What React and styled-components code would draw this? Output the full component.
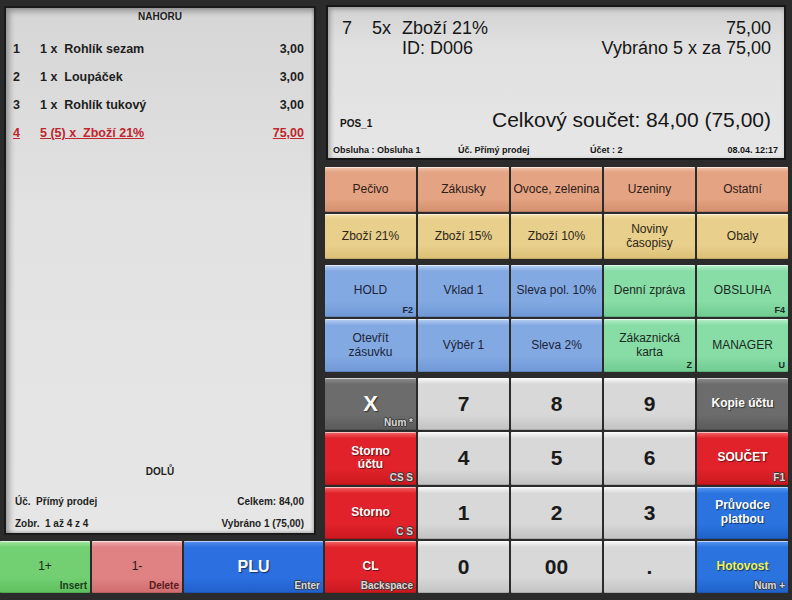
import React from "react";
import styled, { createGlobalStyle } from "styled-components";

const GlobalStyle = createGlobalStyle`
  html, body {
    margin: 0;
    padding: 0;
    background: #2b2b2b;
  }
  body {
    font-family: "Liberation Sans", Arial, sans-serif;
  }
`;

const tones = {
  orange: { hi: "#f3c7b0", base: "#e4a383", low: "#d48f6e", fg: "#2c2018" },
  yellow: { hi: "#f6e2ae", base: "#e8cf8b", low: "#dbbf75", fg: "#2c2618" },
  blue: { hi: "#b8d0f4", base: "#83a9e2", low: "#6f98d6", fg: "#1c2438", hk: "#1c2438" },
  green: { hi: "#b8f0ca", base: "#88dca6", low: "#6fcc90", fg: "#1a2a1e", hk: "#1a2a1e" },
  gray: { hi: "#fafafa", base: "#d8d8d8", low: "#c2c2c2", fg: "#1a1a1a" },
  dark: { hi: "#8e8e8e", base: "#6c6c6c", low: "#5a5a5a", fg: "#ffffff", hk: "#d8d8d8", outline: true },
  red: { hi: "#f46a6a", base: "#e2222a", low: "#c9181f", fg: "#ffffff", hk: "#e4d4d4", outline: true },
  pay: { hi: "#5a98f0", base: "#2b74e0", low: "#1f62c8", fg: "#ffffff", hk: "#d0dcf0", outline: true },
  plus: { hi: "#a6e8a6", base: "#72d072", low: "#5cbf5c", fg: "#1a2a1a", hk: "#1d3a1d" },
  minus: { hi: "#f2b0b0", base: "#e08284", low: "#d06c6e", fg: "#2a1616", hk: "#5a1c1c" },
  plu: { hi: "#5a92ee", base: "#2c6fe0", low: "#2160cc", fg: "#ffffff", hk: "#d0dcf0", outline: true },
};

const Page = styled.div`
  width: 792px;
  height: 600px;
  display: flex;
  gap: 2px;
  box-sizing: border-box;
  padding-bottom: 7px;
  overflow: hidden;
`;

const LeftColumn = styled.div`
  width: 323px;
  display: flex;
  flex-direction: column;
`;

const ReceiptPanel = styled.div`
  margin: 6px 7px 6px 4px;
  flex: 1;
  border: 2px solid #1a1a1a;
  background: linear-gradient(to bottom, #d6d6d6 0%, #e2e2e2 40%, #e6e6e6 100%);
  box-shadow: inset 3px 3px 6px rgba(0, 0, 0, 0.35), inset -1px -1px 3px rgba(0, 0, 0, 0.2);
  display: flex;
  flex-direction: column;
  color: #1e1e1e;
`;

const PanelCaption = styled.div`
  height: ${(p) => p.$h || 18}px;
  line-height: ${(p) => p.$h || 18}px;
  text-align: center;
  font-size: 10px;
  font-weight: bold;
`;

const ItemList = styled.div`
  margin-top: 9px;
  display: flex;
  flex-direction: column;
`;

const ItemRow = styled.div`
  height: 28px;
  display: grid;
  grid-template-columns: 27px 1fr auto;
  align-items: center;
  padding: 0 10px 0 7px;
  font-size: 12.5px;
  font-weight: bold;
  color: ${(p) => (p.$selected ? "#c0262c" : "#1e1e1e")};
  text-decoration: ${(p) => (p.$selected ? "underline" : "none")};
`;

const ItemText = styled.span`
  white-space: pre;
`;

const Spacer = styled.div`
  flex: 1;
`;

const PanelFooterRow = styled.div`
  height: 20px;
  display: flex;
  justify-content: space-between;
  align-items: center;
  padding: 0 10px 0 9px;
  font-size: 10px;
  font-weight: bold;
  margin-top: ${(p) => p.$top || 0}px;
  white-space: pre;
`;

const BottomKeys = styled.div`
  height: 52px;
  display: grid;
  grid-template-columns: 90px 90px 1fr;
  gap: 2px;
`;

const RightColumn = styled.div`
  width: 463px;
  display: flex;
  flex-direction: column;
`;

const Display = styled.div`
  margin: 5px 2px 0 1px;
  height: 155px;
  box-sizing: border-box;
  border: 2px solid #161616;
  background: linear-gradient(to bottom, #d2d2d2 0%, #e0e0e0 25%, #e6e6e6 100%);
  box-shadow: inset 2px 2px 5px rgba(0, 0, 0, 0.3);
  display: flex;
  flex-direction: column;
  padding-top: 11px;
  color: #161616;
`;

const DisplayLine = styled.div`
  height: 20px;
  display: grid;
  grid-template-columns: 30px 30px 1fr auto;
  align-items: center;
  padding: 0 13px 0 14px;
  font-size: 18px;
  white-space: pre;
`;

const TotalRow = styled.div`
  height: 26px;
  display: flex;
  justify-content: space-between;
  align-items: baseline;
  padding: 0 13px 0 12px;
`;

const PosName = styled.span`
  font-size: 10px;
  font-weight: bold;
`;

const Total = styled.span`
  font-size: 21px;
`;

const StatusBar = styled.div`
  height: 14px;
  margin: 9px 0 1px;
  padding: 0 6px 0 5px;
  display: grid;
  grid-template-columns: 125px 132px 1fr auto;
  align-items: center;
  font-size: 9px;
  font-weight: bold;
  white-space: pre;
`;

const KeyGrid = styled.div`
  display: grid;
  grid-template-columns: repeat(5, 1fr);
  grid-template-rows: ${(p) => p.$rows};
  gap: 2px;
  margin-top: ${(p) => p.$top}px;
  height: ${(p) => p.$h}px;
`;

const Key = styled.button`
  position: relative;
  margin: 0;
  border: none;
  border-radius: 1px;
  padding: 0 2px;
  display: flex;
  align-items: center;
  justify-content: center;
  text-align: center;
  line-height: 1.15;
  font-family: "Liberation Sans", Arial, sans-serif;
  font-size: ${(p) => p.$size || 12}px;
  font-weight: ${(p) => (p.$bold ? "bold" : "normal")};
  color: ${(p) => p.$color || tones[p.$tone].fg};
  background: linear-gradient(
    to bottom,
    ${(p) => tones[p.$tone].hi} 0%,
    ${(p) => tones[p.$tone].base} 12%,
    ${(p) => tones[p.$tone].base} 70%,
    ${(p) => tones[p.$tone].low} 100%
  );
  box-shadow: inset 0 1px 0 rgba(255, 255, 255, 0.6), inset 0 -1px 0 rgba(0, 0, 0, 0.12);
  text-shadow: ${(p) => (tones[p.$tone].outline ? "1px 1px 1px rgba(0,0,0,0.55)" : "none")};
  cursor: pointer;
`;

const Hotkey = styled.span`
  position: absolute;
  right: 3px;
  bottom: 2px;
  font-size: ${(p) => p.$size || 9}px;
  font-weight: bold;
  line-height: 1;
  color: ${(p) => tones[p.$tone].hk || "#222"};
  text-shadow: ${(p) =>
    tones[p.$tone].outline
      ? "-1px 0 0 #3a3a3a, 1px 0 0 #3a3a3a, 0 -1px 0 #3a3a3a, 0 1px 0 #3a3a3a"
      : "none"};
`;

const items = [
  { n: "1", qty: "1 x", name: "Rohlík sezam", price: "3,00" },
  { n: "2", qty: "1 x", name: "Loupáček", price: "3,00" },
  { n: "3", qty: "1 x", name: "Rohlík tukový", price: "3,00" },
  { n: "4", qty: "5 (5) x", name: "Zboží 21%", price: "75,00", selected: true },
];

const categories = ["Pečivo", "Zákusky", "Ovoce, zelenina", "Uzeniny", "Ostatní"];

const goods = ["Zboží 21%", "Zboží 15%", "Zboží 10%", ["Noviny", "časopisy"], "Obaly"];

const functions = [
  { label: "HOLD", tone: "blue", hk: "F2" },
  { label: "Vklad 1", tone: "blue" },
  { label: "Sleva pol. 10%", tone: "blue" },
  { label: "Denní zpráva", tone: "green" },
  { label: "OBSLUHA", tone: "green", hk: "F4" },
  { label: ["Otevřít", "zásuvku"], tone: "blue" },
  { label: "Výběr 1", tone: "blue" },
  { label: "Sleva 2%", tone: "blue" },
  { label: ["Zákaznická", "karta"], tone: "green", hk: "Z" },
  { label: "MANAGER", tone: "green", hk: "U" },
];

const numpad = [
  { label: "X", tone: "dark", size: 22, hk: "Num *" },
  { label: "7", tone: "gray", size: 21 },
  { label: "8", tone: "gray", size: 21 },
  { label: "9", tone: "gray", size: 21 },
  { label: "Kopie účtu", tone: "dark", size: 12 },
  { label: ["Storno", "účtu"], tone: "red", size: 12, hk: "CS S" },
  { label: "4", tone: "gray", size: 21 },
  { label: "5", tone: "gray", size: 21 },
  { label: "6", tone: "gray", size: 21 },
  { label: "SOUČET", tone: "red", size: 12, hk: "F1" },
  { label: "Storno", tone: "red", size: 12, hk: "C S" },
  { label: "1", tone: "gray", size: 21 },
  { label: "2", tone: "gray", size: 21 },
  { label: "3", tone: "gray", size: 21 },
  { label: ["Průvodce", "platbou"], tone: "pay", size: 12 },
  { label: "CL", tone: "red", size: 12, hk: "Backspace" },
  { label: "0", tone: "gray", size: 21 },
  { label: "00", tone: "gray", size: 21 },
  { label: ".", tone: "gray", size: 21 },
  { label: "Hotovost", tone: "pay", size: 12, hk: "Num +", color: "#eef25a" },
];

function renderLabel(label) {
  if (Array.isArray(label)) {
    return (
      <span>
        {label[0]}
        <br />
        {label[1]}
      </span>
    );
  }
  return label;
}

export default function App() {
  return (
    <>
      <GlobalStyle />
      <Page>
        <LeftColumn>
          <ReceiptPanel>
            <PanelCaption>NAHORU</PanelCaption>
            <ItemList>
              {items.map((it) => (
                <ItemRow key={it.n} $selected={it.selected}>
                  <span>{it.n}</span>
                  <ItemText>{`${it.qty}  ${it.name}`}</ItemText>
                  <span>{it.price}</span>
                </ItemRow>
              ))}
            </ItemList>
            <Spacer />
            <PanelCaption $h={20}>DOLŮ</PanelCaption>
            <PanelFooterRow $top={9}>
              <span>Úč.  Přímý prodej</span>
              <span>Celkem: 84,00</span>
            </PanelFooterRow>
            <PanelFooterRow $top={2}>
              <span>Zobr.  1 až 4 z 4</span>
              <span>Vybráno 1 (75,00)</span>
            </PanelFooterRow>
          </ReceiptPanel>
          <BottomKeys>
            <Key $tone="plus" $size={12}>
              1+
              <Hotkey $tone="plus" $size={10}>Insert</Hotkey>
            </Key>
            <Key $tone="minus" $size={12}>
              1-
              <Hotkey $tone="minus" $size={10}>Delete</Hotkey>
            </Key>
            <Key $tone="plu" $size={16} $bold>
              PLU
              <Hotkey $tone="plu" $size={10}>Enter</Hotkey>
            </Key>
          </BottomKeys>
        </LeftColumn>

        <RightColumn>
          <Display>
            <DisplayLine>
              <span>7</span>
              <span>5x</span>
              <span>Zboží 21%</span>
              <span>75,00</span>
            </DisplayLine>
            <DisplayLine>
              <span />
              <span />
              <span>ID: D006</span>
              <span>Vybráno 5 x za 75,00</span>
            </DisplayLine>
            <Spacer />
            <TotalRow>
              <PosName>POS_1</PosName>
              <Total>Celkový součet: 84,00 (75,00)</Total>
            </TotalRow>
            <StatusBar>
              <span>Obsluha : Obsluha 1</span>
              <span>Úč. Přímý prodej</span>
              <span>Účet : 2</span>
              <span>08.04. 12:17</span>
            </StatusBar>
          </Display>

          <KeyGrid $rows="45px 45px" $top={7} $h={92}>
            {categories.map((c) => (
              <Key key={c} $tone="orange">
                {c}
              </Key>
            ))}
            {goods.map((g, i) => (
              <Key key={i} $tone="yellow">
                {renderLabel(g)}
              </Key>
            ))}
          </KeyGrid>

          <KeyGrid $rows="52px 53px" $top={6} $h={107}>
            {functions.map((f, i) => (
              <Key key={i} $tone={f.tone}>
                {renderLabel(f.label)}
                {f.hk && <Hotkey $tone={f.tone}>{f.hk}</Hotkey>}
              </Key>
            ))}
          </KeyGrid>

          <KeyGrid $rows="repeat(4, 1fr)" $top={6} $h={215}>
            {numpad.map((k, i) => (
              <Key key={i} $tone={k.tone} $size={k.size} $color={k.color} $bold>
                {renderLabel(k.label)}
                {k.hk && (
                  <Hotkey $tone={k.tone} $size={k.tone === "gray" ? 9 : 10}>
                    {k.hk}
                  </Hotkey>
                )}
              </Key>
            ))}
          </KeyGrid>
        </RightColumn>
      </Page>
    </>
  );
}
